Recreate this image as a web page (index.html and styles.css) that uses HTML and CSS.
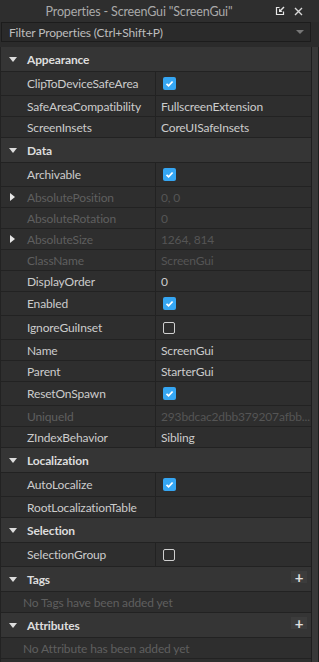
FILE: index.html
```html
<!DOCTYPE html>
<html lang="en">
<head>
    <meta charset="UTF-8">
    <meta name="viewport" content="width=device-width, initial-scale=1.0">
    <title>Properties</title>
    <link rel="stylesheet" href="styles.css">
</head>
<body>
    <div class="window">
        <div class="titlebar">
            <span class="title">Properties - ScreenGui "ScreenGui"</span>
            <div class="title-icons">
                <svg width="10" height="10" viewBox="0 0 10 10">
                    <path d="M4.5 1.5H1.5V8.5H8.5V5.5" fill="none" stroke="#e6e6e6" stroke-width="1.2"/>
                    <path d="M9 1L5 5" stroke="#e6e6e6" stroke-width="1.4"/>
                    <path d="M4 2.5V6H7.5Z" fill="#e6e6e6"/>
                </svg>
                <svg width="9" height="9" viewBox="0 0 9 9">
                    <path d="M1 1L8 8M8 1L1 8" stroke="#d8d8d8" stroke-width="1.4"/>
                </svg>
            </div>
        </div>

        <div class="filter">
            <span>Filter Properties (Ctrl+Shift+P)</span>
            <span class="caret"></span>
        </div>

        <div class="body">
            <div class="list">
                <div class="section">
                    <span class="arrow-down"></span>Appearance
                </div>
                <div class="row tall">
                    <div class="label">ClipToDeviceSafeArea</div>
                    <div class="value"><span class="check on"></span></div>
                </div>
                <div class="row">
                    <div class="label">SafeAreaCompatibility</div>
                    <div class="value">FullscreenExtension</div>
                </div>
                <div class="row">
                    <div class="label">ScreenInsets</div>
                    <div class="value">CoreUISafeInsets</div>
                </div>

                <div class="section">
                    <span class="arrow-down"></span>Data
                </div>
                <div class="row tall">
                    <div class="label">Archivable</div>
                    <div class="value"><span class="check on"></span></div>
                </div>
                <div class="row disabled">
                    <div class="label"><span class="arrow-right"></span>AbsolutePosition</div>
                    <div class="value">0, 0</div>
                </div>
                <div class="row disabled">
                    <div class="label">AbsoluteRotation</div>
                    <div class="value">0</div>
                </div>
                <div class="row disabled">
                    <div class="label"><span class="arrow-right"></span>AbsoluteSize</div>
                    <div class="value">1264, 814</div>
                </div>
                <div class="row disabled">
                    <div class="label">ClassName</div>
                    <div class="value">ScreenGui</div>
                </div>
                <div class="row">
                    <div class="label">DisplayOrder</div>
                    <div class="value">0</div>
                </div>
                <div class="row tall">
                    <div class="label">Enabled</div>
                    <div class="value"><span class="check on"></span></div>
                </div>
                <div class="row tall">
                    <div class="label">IgnoreGuiInset</div>
                    <div class="value"><span class="check"></span></div>
                </div>
                <div class="row">
                    <div class="label">Name</div>
                    <div class="value">ScreenGui</div>
                </div>
                <div class="row">
                    <div class="label">Parent</div>
                    <div class="value">StarterGui</div>
                </div>
                <div class="row tall">
                    <div class="label">ResetOnSpawn</div>
                    <div class="value"><span class="check on"></span></div>
                </div>
                <div class="row disabled">
                    <div class="label">UniqueId</div>
                    <div class="value">293bdcac2dbb379207afbb...</div>
                </div>
                <div class="row">
                    <div class="label">ZIndexBehavior</div>
                    <div class="value">Sibling</div>
                </div>

                <div class="section">
                    <span class="arrow-down"></span>Localization
                </div>
                <div class="row tall">
                    <div class="label">AutoLocalize</div>
                    <div class="value"><span class="check on"></span></div>
                </div>
                <div class="row">
                    <div class="label">RootLocalizationTable</div>
                    <div class="value"></div>
                </div>

                <div class="section">
                    <span class="arrow-down"></span>Selection
                </div>
                <div class="row tall">
                    <div class="label">SelectionGroup</div>
                    <div class="value"><span class="check"></span></div>
                </div>

                <div class="section">
                    <span class="arrow-down"></span>Tags
                    <span class="add">+</span>
                </div>
                <div class="empty">No Tags have been added yet</div>

                <div class="section">
                    <span class="arrow-down"></span>Attributes
                    <span class="add">+</span>
                </div>
                <div class="empty">No Attribute has been added yet</div>
            </div>
            <div class="scrollbar"></div>
        </div>
    </div>
</body>
</html>
```

FILE: styles.css
```css
body {
    margin: 0;
    padding: 0;
    background: #2b2b2b;
    font-family: Lato, "Open Sans", sans-serif;
    font-size: 12px;
    letter-spacing: -0.15px;
    color: #cccccc;
}
.window {
    width: 319px;
    height: 662px;
    display: flex;
    flex-direction: column;
    overflow: hidden;
}
.titlebar {
    height: 22px;
    display: flex;
    align-items: center;
    position: relative;
    background: #2e2e2e;
}
.title {
    width: 278px;
    text-align: center;
    color: #aaaaaa;
    font-size: 12.5px;
}
.title-icons {
    position: absolute;
    top: 6px;
    right: 16px;
    display: flex;
    gap: 9px;
    align-items: center;
}
.filter {
    height: 18px;
    margin: 0 8px 5px 1px;
    border: 1px solid #1c1c1c;
    background: #2a2a2a;
    display: flex;
    align-items: center;
    justify-content: space-between;
    padding: 0 6px 0 7px;
    color: #bdbdbd;
    font-size: 12px;
}
.caret {
    width: 0;
    height: 0;
    border-left: 4px solid transparent;
    border-right: 4px solid transparent;
    border-top: 4px solid #777777;
}
.body {
    flex: 1;
    display: flex;
}
.list {
    width: 310px;
    border-left: 1px solid #222222;
    background: #2e2e2e;
}
.scrollbar {
    width: 6px;
    border-left: 1px solid #1e1e1e;
    border-right: 1px solid #1e1e1e;
    background: #383838;
}
.section {
    height: 24px;
    border-bottom: 1px solid #222222;
    background: #353535;
    display: flex;
    align-items: center;
    font-weight: bold;
    color: #dddddd;
    position: relative;
}
.arrow-down {
    width: 0;
    height: 0;
    margin: 0 10px 0 8px;
    border-left: 4px solid transparent;
    border-right: 4px solid transparent;
    border-top: 5px solid #dddddd;
}
.arrow-right {
    position: absolute;
    left: 9px;
    top: 6px;
    width: 0;
    height: 0;
    border-top: 4px solid transparent;
    border-bottom: 4px solid transparent;
    border-left: 5px solid #e6e6e6;
}
.add {
    position: absolute;
    right: 4px;
    top: 4px;
    width: 16px;
    height: 12px;
    background: #3c3c3c;
    color: #e0e0e0;
    font-weight: bold;
    font-size: 15px;
    line-height: 12px;
    text-align: center;
}
.row {
    height: 20px;
    border-bottom: 1px solid #222222;
    display: grid;
    grid-template-columns: 155px 1fr;
}
.row.tall {
    height: 23px;
}
.label {
    position: relative;
    border-right: 1px solid #222222;
    padding-left: 26px;
    display: flex;
    align-items: center;
    white-space: nowrap;
}
.value {
    padding-left: 5px;
    display: flex;
    align-items: center;
    white-space: nowrap;
    overflow: hidden;
}
.row.disabled .label {
    color: #5f5f5f;
}
.row.disabled .value {
    color: #555555;
}
.check {
    width: 10px;
    height: 10px;
    margin-left: 2px;
    border: 1.5px solid #d0d0d0;
    border-radius: 2px;
}
.check.on {
    width: 13px;
    height: 13px;
    border: none;
    background: #35a6f3 url("data:image/svg+xml;utf8,<svg xmlns='http://www.w3.org/2000/svg' width='13' height='13'><path d='M3.5 6.8L5.6 8.8L9.6 4.5' fill='none' stroke='white' stroke-width='1.8'/></svg>") no-repeat center;
}
.empty {
    height: 20px;
    border-bottom: 1px solid #222222;
    padding-left: 22px;
    display: flex;
    align-items: center;
    color: #5f5f5f;
}
```
